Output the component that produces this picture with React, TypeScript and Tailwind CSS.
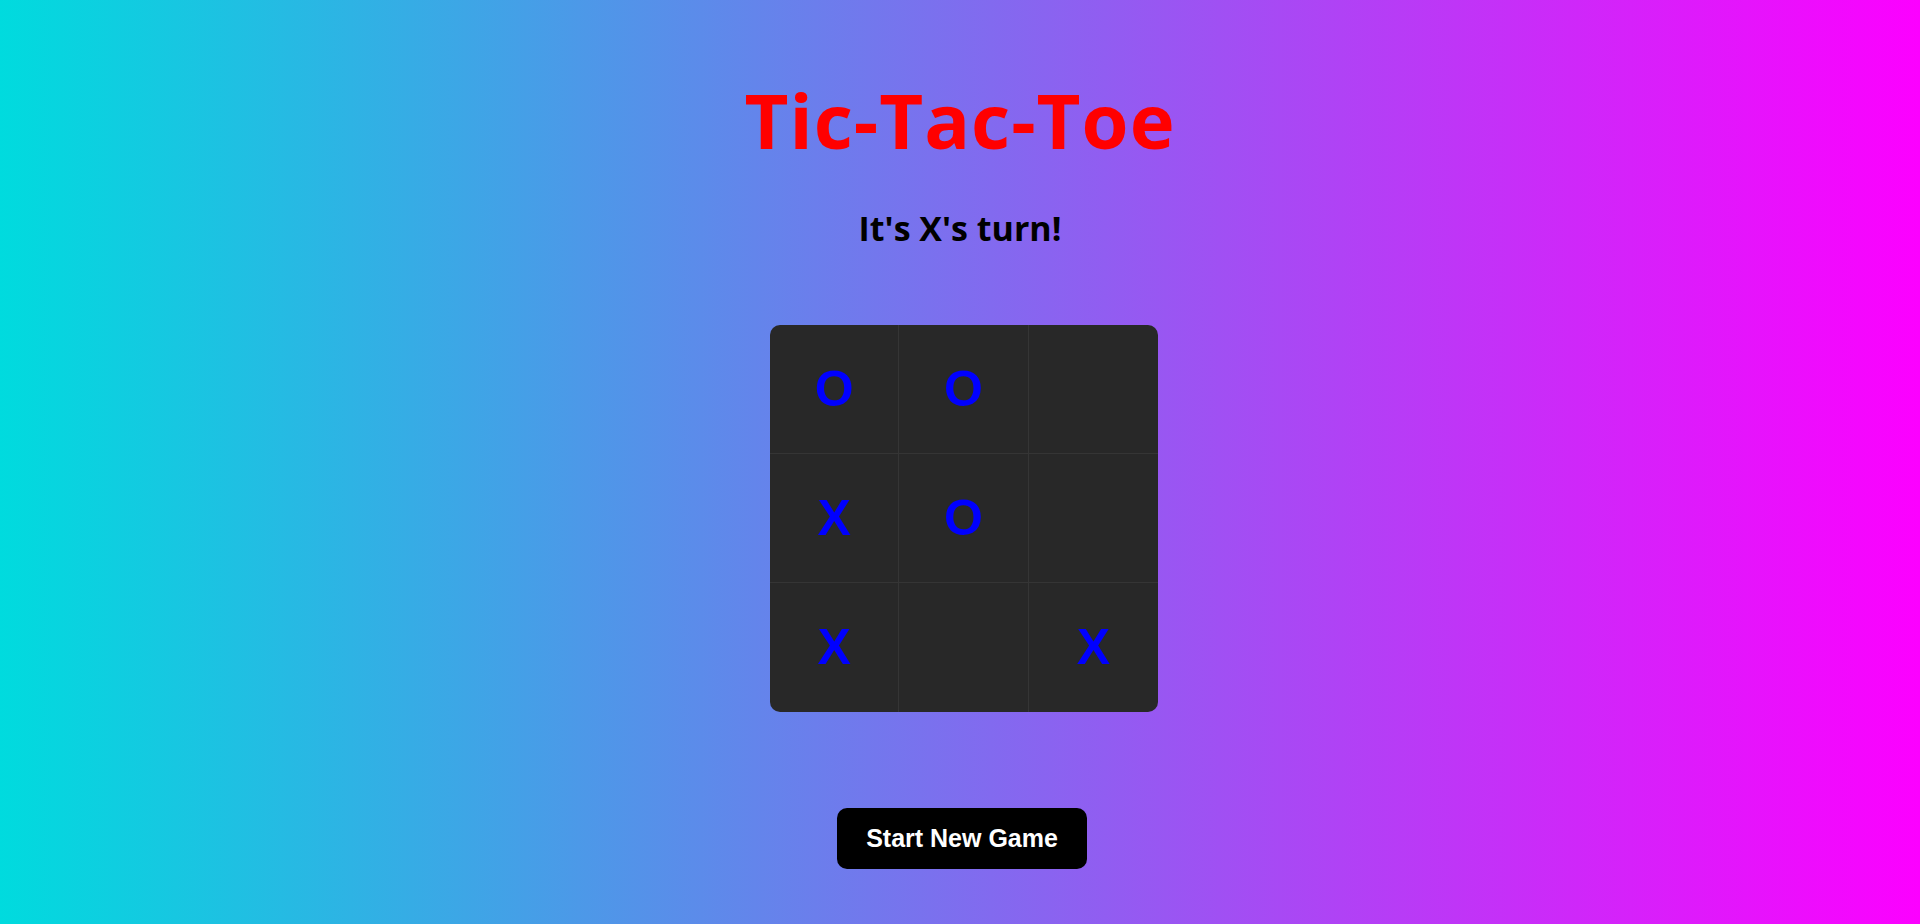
import React from "react";

const board = ["O", "O", "", "X", "O", "", "X", "", "X"];

export default function App() {
  return (
    <div className="w-full h-[924px] bg-[linear-gradient(to_right,#00dbde,#fc00ff)] flex flex-col items-center overflow-hidden">
      <h1 className="mt-[72px] text-[76px] leading-[96px] font-bold text-[#ff0000] tracking-[1px] font-['Open_Sans',sans-serif]">
        Tic-Tac-Toe
      </h1>
      <p className="mt-[40px] text-[34px] leading-[40px] font-bold text-black font-['Open_Sans',sans-serif]">
        It's X's turn!
      </p>
      <div className="mt-[77px] ml-[8px] w-[388px] h-[387px] rounded-[10px] bg-[#282828] grid grid-cols-3 grid-rows-3 overflow-hidden">
        {board.map((v, i) => (
          <div
            key={i}
            className={`flex items-center justify-center text-[50px] font-bold text-[#0000ff] border-[#353535] font-['Liberation_Sans',Arial,sans-serif] ${i % 3 !== 2 ? "border-r" : ""} ${i < 6 ? "border-b" : ""}`}
          >
            {v}
          </div>
        ))}
      </div>
      <button className="mt-[96px] ml-[4px] w-[250px] h-[61px] rounded-[10px] bg-black text-white text-[25px] font-bold font-['Liberation_Sans',Arial,sans-serif]">
        Start New Game
      </button>
    </div>
  );
}
